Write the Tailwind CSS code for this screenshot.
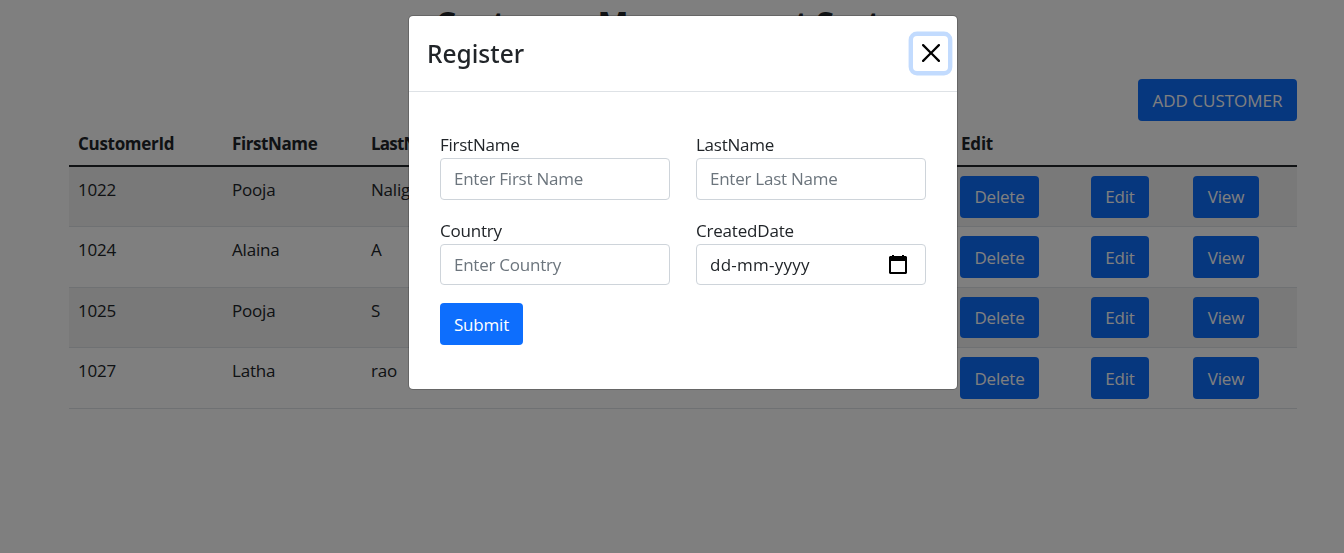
<!DOCTYPE html>
<html lang="en">
<head>
<meta charset="utf-8">
<title>Customer Management System</title>
<script src="https://cdn.jsdelivr.net/npm/@tailwindcss/browser@4"></script>
</head>
<body class="h-[553px] overflow-hidden bg-white font-['Open_Sans','Noto_Sans',sans-serif] text-[17px] leading-[26px] tracking-[-0.2px] text-[#212529]">
<main class="ml-[69px] w-[1228px]">
  <h1 class="h-[79px] pt-[2px] text-center text-[33px] leading-[42px] font-bold tracking-[-0.8px]">Customer Management System</h1>
  <div class="flex justify-end"><button class="h-[42px] w-[159px] rounded bg-[#0d6efd] pt-px tracking-[0px] text-white">ADD CUSTOMER</button></div>
  <div class="grid h-[46px] grid-cols-[154px_139px_520px_1fr] border-b-2 border-[#212529] pt-[10px] pl-[9px] font-bold tracking-[-0.4px]">
    <div class="tracking-[-0.3px]">CustomerId</div><div>FirstName</div><div class="tracking-[-0.8px]">LastName</div><div class="pl-[70px] tracking-[-0.2px]">Edit</div>
  </div>
  <div class="grid h-[60px] grid-cols-[154px_139px_589px_131px_102px_1fr] border-b border-[#dee2e6] bg-[#f2f2f2] pt-[9px] pl-[9px]">
    <div class="pt-px">1022</div><div class="pt-px">Pooja</div><div class="pt-px">Naligi</div>
    <div><button class="h-[42px] w-[79px] rounded bg-[#0d6efd] text-white">Delete</button></div>
    <div><button class="h-[42px] w-[58px] rounded bg-[#0d6efd] text-white">Edit</button></div>
    <div><button class="h-[42px] w-[66px] rounded bg-[#0d6efd] text-white">View</button></div>
  </div>
  <div class="grid h-[61px] grid-cols-[154px_139px_589px_131px_102px_1fr] border-b border-[#dee2e6] pt-[9px] pl-[9px]">
    <div class="pt-px">1024</div><div class="pt-px">Alaina</div><div class="pt-px">A</div>
    <div><button class="h-[42px] w-[79px] rounded bg-[#0d6efd] pt-px text-white">Delete</button></div>
    <div><button class="h-[42px] w-[58px] rounded bg-[#0d6efd] pt-px text-white">Edit</button></div>
    <div><button class="h-[42px] w-[66px] rounded bg-[#0d6efd] pt-px text-white">View</button></div>
  </div>
  <div class="grid h-[60px] grid-cols-[154px_139px_589px_131px_102px_1fr] border-b border-[#dee2e6] bg-[#f2f2f2] pt-[9px] pl-[9px]">
    <div class="pt-px">1025</div><div class="pt-px">Pooja</div><div class="pt-px">S</div>
    <div><button class="h-[41px] w-[79px] rounded bg-[#0d6efd] text-white">Delete</button></div>
    <div><button class="h-[41px] w-[58px] rounded bg-[#0d6efd] text-white">Edit</button></div>
    <div><button class="h-[41px] w-[66px] rounded bg-[#0d6efd] text-white">View</button></div>
  </div>
  <div class="grid h-[61px] grid-cols-[154px_139px_589px_131px_102px_1fr] border-b border-[#dee2e6] pt-[9px] pl-[9px]">
    <div class="pt-px">1027</div><div class="pt-px">Latha</div><div class="pt-px">rao</div>
    <div><button class="h-[42px] w-[79px] rounded bg-[#0d6efd] pt-px text-white">Delete</button></div>
    <div><button class="h-[42px] w-[58px] rounded bg-[#0d6efd] pt-px text-white">Edit</button></div>
    <div><button class="h-[42px] w-[66px] rounded bg-[#0d6efd] pt-px text-white">View</button></div>
  </div>
</main>

<div class="fixed inset-0 bg-black/50"></div>
<div role="dialog" class="fixed top-[15px] left-[408px] h-[375px] w-[550px] rounded-[5px] border border-black/20 bg-white bg-clip-padding">
  <div class="flex h-[76px] items-center justify-between border-b border-[#dee2e6] pr-[9px] pl-[18px]">
    <h5 class="pt-px font-['Noto_Sans',sans-serif] text-[24.5px] leading-[38px] font-medium tracking-[0px]">Register</h5>
    <button aria-label="Close" class="flex size-[35px] items-center justify-center rounded-[4px] pb-px shadow-[0_0_0_4.4px_#c2dbfe]">
      <svg class="size-[18px]" viewBox="0 0 16 16" fill="#000"><path d="M.293.293a1 1 0 0 1 1.414 0L8 6.586 14.293.293a1 1 0 1 1 1.414 1.414L9.414 8l6.293 6.293a1 1 0 0 1-1.414 1.414L8 9.414l-6.293 6.293a1 1 0 0 1-1.414-1.414L6.586 8 .293 1.707a1 1 0 0 1 0-1.414z"/></svg>
    </button>
  </div>
  <form class="grid grid-cols-[230px_230px] gap-x-[26px] pt-[40px] pl-[31px]">
    <div class="h-[86px]">
      <label class="block tracking-[-0.25px]">FirstName</label>
      <input placeholder="Enter First Name" class="block h-[42px] w-full rounded border border-[#ced4da] px-[13px] pb-[2px] tracking-[-0.25px] placeholder:text-[#6c757d]">
    </div>
    <div class="h-[86px]">
      <label class="block tracking-[-0.25px]">LastName</label>
      <input placeholder="Enter Last Name" class="block h-[42px] w-full rounded border border-[#ced4da] px-[13px] pb-[2px] tracking-[-0.25px] placeholder:text-[#6c757d]">
    </div>
    <div class="h-[85px]">
      <label class="block">Country</label>
      <input placeholder="Enter Country" class="block h-[41px] w-full rounded border border-[#ced4da] px-[13px] tracking-[-0.25px] placeholder:text-[#6c757d]">
    </div>
    <div class="h-[85px]">
      <label class="block">CreatedDate</label>
      <div class="flex h-[41px] items-center justify-between rounded border border-[#ced4da] pr-[18px] pl-[13px] tracking-[0.25px]">
        <span>dd-mm-yyyy</span>
        <svg class="h-[19px] w-[18px]" viewBox="0 0 18 19"><path d="M3 0h2v1h8V0h2v1h2l1 1v16l-1 1H1l-1-1V2l1-1h2zM2 6v11h14V6z" fill="#000" fill-rule="evenodd"/></svg>
      </div>
    </div>
    <button type="button" class="h-[42px] w-[83px] rounded bg-[#0d6efd] pt-px text-white">Submit</button>
  </form>
</div>
</body>
</html>
